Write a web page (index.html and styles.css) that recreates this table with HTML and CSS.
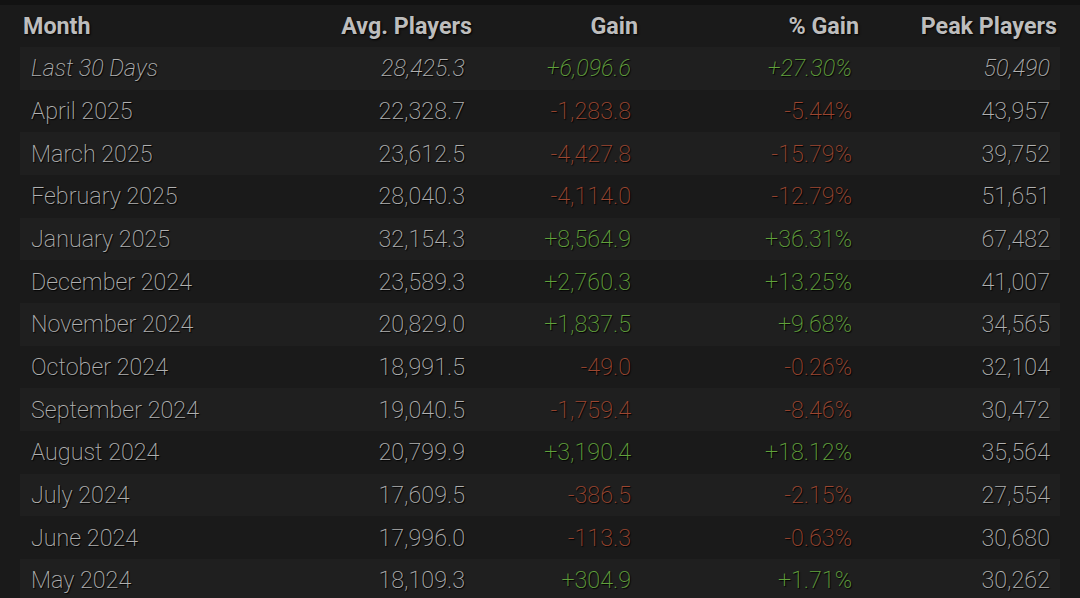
FILE: index.html
```html
<!DOCTYPE html>
<html>
<head>
<meta charset="utf-8">
<link rel="stylesheet" href="styles.css">
</head>
<body>
<div class="topstrip"></div>
<table class="stats">
  <colgroup>
    <col class="c-month"><col class="c-avg"><col class="c-gain"><col class="c-pct"><col class="c-peak">
  </colgroup>
  <thead>
    <tr><th class="left">Month</th><th>Avg. Players</th><th>Gain</th><th>% Gain</th><th>Peak Players</th></tr>
  </thead>
  <tbody>
    <tr class="odd recent"><td class="left">Last 30 Days</td><td>28,425.3</td><td class="pos">+6,096.6</td><td class="pos">+27.30%</td><td>50,490</td></tr>
    <tr><td class="left">April 2025</td><td>22,328.7</td><td class="neg">-1,283.8</td><td class="neg">-5.44%</td><td>43,957</td></tr>
    <tr class="odd"><td class="left">March 2025</td><td>23,612.5</td><td class="neg">-4,427.8</td><td class="neg">-15.79%</td><td>39,752</td></tr>
    <tr><td class="left">February 2025</td><td>28,040.3</td><td class="neg">-4,114.0</td><td class="neg">-12.79%</td><td>51,651</td></tr>
    <tr class="odd"><td class="left">January 2025</td><td>32,154.3</td><td class="pos">+8,564.9</td><td class="pos">+36.31%</td><td>67,482</td></tr>
    <tr><td class="left">December 2024</td><td>23,589.3</td><td class="pos">+2,760.3</td><td class="pos">+13.25%</td><td>41,007</td></tr>
    <tr class="odd"><td class="left">November 2024</td><td>20,829.0</td><td class="pos">+1,837.5</td><td class="pos">+9.68%</td><td>34,565</td></tr>
    <tr><td class="left">October 2024</td><td>18,991.5</td><td class="neg">-49.0</td><td class="neg">-0.26%</td><td>32,104</td></tr>
    <tr class="odd"><td class="left">September 2024</td><td>19,040.5</td><td class="neg">-1,759.4</td><td class="neg">-8.46%</td><td>30,472</td></tr>
    <tr><td class="left">August 2024</td><td>20,799.9</td><td class="pos">+3,190.4</td><td class="pos">+18.12%</td><td>35,564</td></tr>
    <tr class="odd"><td class="left">July 2024</td><td>17,609.5</td><td class="neg">-386.5</td><td class="neg">-2.15%</td><td>27,554</td></tr>
    <tr><td class="left">June 2024</td><td>17,996.0</td><td class="neg">-113.3</td><td class="neg">-0.63%</td><td>30,680</td></tr>
    <tr class="odd"><td class="left">May 2024</td><td>18,109.3</td><td class="pos">+304.9</td><td class="pos">+1.71%</td><td>30,262</td></tr>
  </tbody>
</table>
</body>
</html>
```
FILE: styles.css
```css
html, body {
  margin: 0;
  padding: 0;
  background: #1a1a1a;
  overflow: hidden;
}
body {
  font-family: Roboto, "Liberation Sans", sans-serif;
  width: 1080px;
  height: 598px;
}
.topstrip {
  height: 5px;
  background: #121212;
}
.stats {
  margin-left: 20px;
  width: 1040px;
  border-collapse: collapse;
  table-layout: fixed;
}
.c-month { width: 270px; }
.c-avg { width: 185px; }
.c-gain { width: 166px; }
.c-pct { width: 221px; }
.c-peak { width: 198px; }

.stats th {
  height: 42px;
  padding: 0 3px 0 3px;
  text-align: right;
  font-weight: 700;
  font-size: 23.3px;
  color: #bdbdbd;
  text-shadow: 1px 1px 2px #000;
  vertical-align: middle;
}
.stats th.left { text-align: left; }

.stats td {
  height: 42.67px;
  padding: 0 10px 0 11px;
  text-align: right;
  font-weight: 200;
  font-size: 23.3px;
  color: #b0b0b0;
  text-shadow: 1px 1px 1px #000;
  vertical-align: middle;
  box-sizing: border-box;
}
.stats td.left { text-align: left; }
.stats tr.odd td { background: #1f1f1f; }
.stats tr.recent td { font-style: italic; }
.stats td.pos { color: #62a23c; }
.stats td.neg { color: #9c4630; }
```
